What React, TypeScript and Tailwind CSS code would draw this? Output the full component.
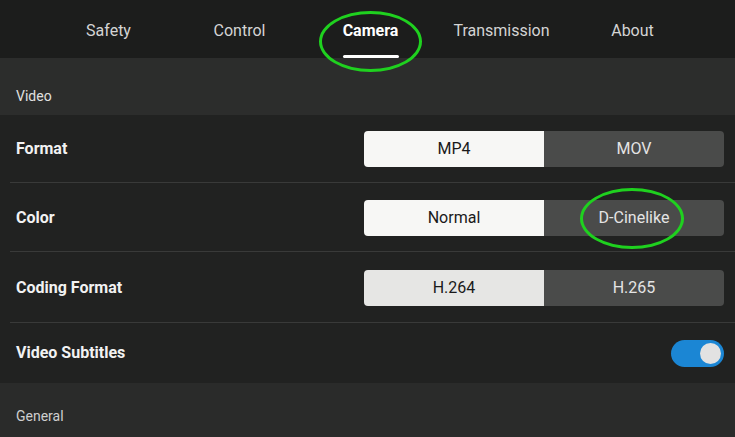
import React from "react";

const tabs = ["Safety", "Control", "Camera", "Transmission", "About"];

function Segmented({
  left,
  right,
  active,
  dim,
}: {
  left: string;
  right: string;
  active: "left" | "right";
  dim?: boolean;
}) {
  const on = dim ? "bg-[#e6e6e4] text-[#1a1a1a]" : "bg-[#f7f7f5] text-[#1a1a1a]";
  const off = "bg-[#4a4b4a] text-[#e4e4e4]";
  return (
    <div className="flex h-[36px] w-[360px] overflow-hidden rounded-[4px] text-[16px]">
      <div className={`flex flex-1 items-center justify-center ${active === "left" ? on : off}`}>
        {left}
      </div>
      <div className={`flex flex-1 items-center justify-center ${active === "right" ? on : off}`}>
        {right}
      </div>
    </div>
  );
}

function Row({
  label,
  height,
  children,
  last,
}: {
  label: string;
  height: string;
  children: React.ReactNode;
  last?: boolean;
}) {
  return (
    <div className={`relative flex items-center justify-between pl-4 pr-[11px] ${height}`}>
      <span className="text-[16px] font-bold text-[#f2f2f2]">{label}</span>
      {children}
      {!last && <div className="absolute bottom-0 left-[10px] right-0 h-px bg-[#393a39]" />}
    </div>
  );
}

export default function App() {
  return (
    <div
      className="relative h-[437px] w-[735px] overflow-hidden bg-[#212221] text-white"
      style={{ fontFamily: "Roboto, 'Liberation Sans', sans-serif" }}
    >
      {/* tab bar */}
      <div className="relative flex h-[58px] bg-[#1c1d1c] pl-[43px] pr-[37px]">
        {tabs.map((t) => (
          <div key={t} className="relative flex w-[131px] justify-center pt-[19px]">
            <span
              className={`text-[16px] ${t === "Camera" ? "font-bold text-white" : "text-[#d4d4d4]"}`}
            >
              {t}
            </span>
            {t === "Camera" && (
              <div className="absolute bottom-0 left-1/2 h-[3px] w-[56px] -translate-x-1/2 rounded-sm bg-white" />
            )}
          </div>
        ))}
      </div>

      {/* Video section header */}
      <div className="flex h-[57px] items-end bg-[#2c2d2c] pb-[8px] pl-4">
        <span className="text-[14px] text-[#e0e0e0]">Video</span>
      </div>

      <Row label="Format" height="h-[68px]">
        <Segmented left="MP4" right="MOV" active="left" />
      </Row>
      <Row label="Color" height="h-[69px]">
        <Segmented left="Normal" right="D-Cinelike" active="left" />
      </Row>
      <Row label="Coding Format" height="h-[71px]">
        <Segmented left="H.264" right="H.265" active="left" dim />
      </Row>
      <Row label="Video Subtitles" height="h-[60px]" last>
        <div className="flex h-[27px] w-[53px] items-center justify-end rounded-full bg-[#1b86d4] pr-[3px]">
          <div className="h-[21px] w-[21px] rounded-full bg-[#e2e2e2]" />
        </div>
      </Row>

      {/* General section header */}
      <div className="flex h-[54px] items-end bg-[#2a2b2a] pb-[10px] pl-4">
        <span className="text-[14px] text-[#cfcfcf]">General</span>
      </div>

      {/* annotation circles */}
      <div className="absolute left-[319px] top-[11px] h-[61px] w-[103px] rounded-[50%] border-[3px] border-[#1fd11f]" />
      <div className="absolute left-[580px] top-[188px] h-[61px] w-[104px] rounded-[50%] border-[3px] border-[#1fd11f]" />
    </div>
  );
}
